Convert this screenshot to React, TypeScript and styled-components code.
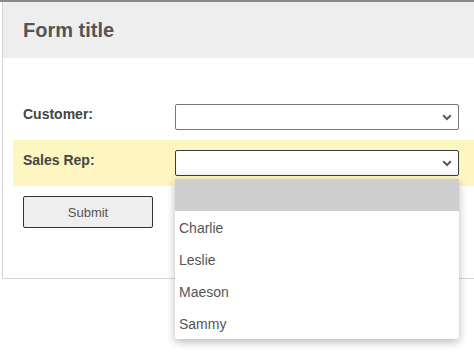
import React, { useState } from "react";
import styled, { createGlobalStyle, css } from "styled-components";

const GlobalStyle = createGlobalStyle`
  html, body {
    margin: 0;
    padding: 0;
    background: #fff;
    font-family: "Liberation Sans", Arial, sans-serif;
  }
`;

interface propRow {
  highlight?: boolean;
}
interface propSelect {
  active?: boolean;
}
interface propOption {
  selected?: boolean;
}

const Page = styled.div`
  width: 474px;
  height: 352px;
  border-top: 2px solid #8a8a8a;
  box-sizing: border-box;
  overflow: hidden;
`;

const Card = styled.div`
  margin-left: 2px;
  border-left: 1px solid #d4d4d4;
  border-bottom: 1px solid #d4d4d4;
  padding-bottom: 50px;
`;

const Header = styled.div`
  height: 56px;
  background: #eeeeee;
  display: flex;
  align-items: center;
  padding-left: 20px;
`;

const Title = styled.h1`
  margin: 0;
  font-size: 20px;
  font-weight: bold;
  color: #555;
`;

const Form = styled.div`
  padding: 36px 0 0 10px;
`;

const Row = styled.div<propRow>`
  ${({ highlight }) =>
    highlight &&
    css`
      background: #fdf6c1;
    `}
  position: relative;
  display: flex;
  align-items: flex-start;
  padding: 10px 15px 10px 10px;
`;

const Label = styled.label`
  width: 152px;
  margin-top: 2px;
  font-size: 14px;
  font-weight: bold;
  color: #444;
`;

const FakeSelect = styled.div<propSelect>`
  ${({ active }) =>
    active
      ? css`
          border-color: #3a3a3a;
          box-shadow: inset 0 -4px 4px rgba(0, 0, 0, 0.04);
        `
      : css`
          border-color: #777;
        `}
  position: relative;
  width: 284px;
  height: 26px;
  box-sizing: border-box;
  border-width: 1px;
  border-style: solid;
  border-radius: 2px;
  background: #fff;
  display: flex;
  align-items: center;
  justify-content: flex-end;
  padding-right: 6px;
  color: #595959;
`;

const Actions = styled.div`
  padding: 10px 0 0 10px;
`;

const SubmitButton = styled.button`
  width: 130px;
  height: 32px;
  background: #eeeeee;
  border: 1px solid #333;
  border-radius: 2px;
  font-family: "Liberation Sans", Arial, sans-serif;
  font-size: 13px;
  color: #555;
  cursor: pointer;
`;

const Dropdown = styled.ul`
  position: absolute;
  left: 0;
  top: 29px;
  width: 284px;
  margin: 0;
  padding: 0;
  list-style: none;
  background: #fff;
  border-radius: 0 0 3px 3px;
  box-shadow: 0 3px 8px rgba(0, 0, 0, 0.28);
  z-index: 2;
  overflow: hidden;
`;

const Option = styled.li<propOption>`
  ${({ selected }) =>
    selected &&
    css`
      background: #cecece;
    `}
  height: 32px;
  box-sizing: border-box;
  padding: 1px 0 0 4px;
  line-height: 32px;
  font-size: 14px;
  color: #555;
`;

const SelectWrap = styled.div`
  position: relative;
`;

function Chevron() {
  return (
    <svg width="10" height="7" viewBox="0 0 10 7">
      <path d="M1.2 1.2 L5 5 L8.8 1.2" fill="none" stroke="currentColor" strokeWidth="2" />
    </svg>
  );
}

const reps = ["", "Charlie", "Leslie", "Maeson", "Sammy"];

function App() {
  const [open] = useState<boolean>(true);

  return (
    <>
      <GlobalStyle />
      <Page>
        <Card>
          <Header>
            <Title>Form title</Title>
          </Header>
          <Form>
            <Row>
              <Label>Customer:</Label>
              <FakeSelect>
                <Chevron />
              </FakeSelect>
            </Row>
            <Row highlight>
              <Label>Sales Rep:</Label>
              <SelectWrap>
                <FakeSelect active>
                  <Chevron />
                </FakeSelect>
                {open && (
                  <Dropdown>
                    {reps.map((name, i) => (
                      <Option key={i} selected={i === 0}>
                        {name}
                      </Option>
                    ))}
                  </Dropdown>
                )}
              </SelectWrap>
            </Row>
            <Actions>
              <SubmitButton>Submit</SubmitButton>
            </Actions>
          </Form>
        </Card>
      </Page>
    </>
  );
}

export default App;
